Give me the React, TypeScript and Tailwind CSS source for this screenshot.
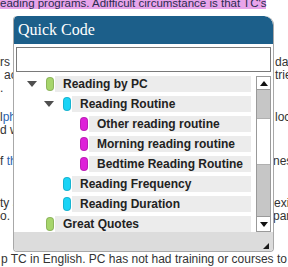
import React from "react";

type Row = { level: 0 | 1 | 2; expand?: boolean; color: "green" | "cyan" | "magenta"; label: string };

const rows: Row[] = [
  { level: 0, expand: true, color: "green", label: "Reading by PC" },
  { level: 1, expand: true, color: "cyan", label: "Reading Routine" },
  { level: 2, color: "magenta", label: "Other reading routine" },
  { level: 2, color: "magenta", label: "Morning reading routine" },
  { level: 2, color: "magenta", label: "Bedtime Reading Routine" },
  { level: 1, color: "cyan", label: "Reading Frequency" },
  { level: 1, color: "cyan", label: "Reading Duration" },
  { level: 0, color: "green", label: "Great Quotes" },
];

const padByLevel = ["pl-[11px]", "pl-[28px]", "pl-[45px]"];
const pillByColor: Record<Row["color"], string> = {
  green: "bg-[#a6d56b]",
  cyan: "bg-[#1ad4f6]",
  magenta: "bg-[#de20d8]",
};

function BgLine({ left, right, rw = "w-[275px]" }: { left: React.ReactNode; right: React.ReactNode; rw?: string }) {
  return (
    <div className="flex h-[13px] leading-[13px] whitespace-nowrap">
      <span className={`${rw} shrink-0`}>{left}</span>
      <span>{right}</span>
    </div>
  );
}

export default function App() {
  return (
    <div className="relative w-[288px] h-[267px] overflow-hidden bg-white font-['Liberation_Sans',Arial,sans-serif] text-[12px] text-[#333]">
      {/* background page text */}
      <div className="-mt-[4px] h-[14px] leading-[14px] whitespace-nowrap text-[11.5px]">
        <span className="bg-[#e8a4ea] text-[#2b2b50]">eading programs. Adifficult circumstance is that TC's</span>
      </div>
      <div className="mt-[46px]">
        <BgLine left="rs" right="days" />
        <BgLine left={<span className="pl-[4px]">ac</span>} right="tries" />
        <BgLine left="." right="" />
      </div>
      <div className="mt-[16px]">
        <BgLine left={<><span>l</span><span className="text-[#2a64b0]">ph</span></>} right="locat" />
        <BgLine left="d w" right="" />
      </div>
      <div className="mt-[18px]">
        <BgLine left={<><span>f </span><span className="text-[#2a64b0]">th</span></>} right="nes" rw="w-[273px]" />
      </div>
      <div className="mt-[29px]">
        <BgLine left={<><span>ty </span><span className="text-[#c9a227]">a</span></>} right="exic" rw="w-[274px]" />
        <BgLine left={<><span>o. </span><span className="text-[#c9a227]">S</span></>} right="parc" rw="w-[273px]" />
      </div>
      <div className="mt-[30px] h-[13px] leading-[13px] whitespace-nowrap pl-[1px]">
        p TC in English. PC has not had training or courses to
      </div>

      {/* Quick Code dialog */}
      <div className="absolute left-[13px] top-[16px] w-[261px] h-[236px] flex flex-col bg-white border border-t-0 border-[#a8a8a8] rounded-b-[4px] rounded-tl-[4px] rounded-tr-[9px] overflow-hidden">
        <div className="h-[28px] shrink-0 bg-[#1c5f8a] pl-[4px] rounded-tl-[4px] rounded-tr-[9px]">
          <span className="font-['Liberation_Serif','Times_New_Roman',serif] text-[16px] leading-[28px] text-white">Quick Code</span>
        </div>
        <div className="px-[2px] pt-[3px]">
          <div className="h-[25px] border border-[#7a7a7a] bg-white" />
        </div>
        <div className="mt-[4px] flex h-[156px] pl-[2px] pr-[2px]">
          <div className="flex-1 flex flex-col gap-[4px] pr-[5px]">
            {rows.map((r, i) => (
              <div key={i} className={`flex h-[16px] items-center ${padByLevel[r.level]}`}>
                <div className="w-[19px] shrink-0 flex items-center">
                  {r.expand ? (
                    <div className="w-0 h-0 border-l-[5px] border-r-[5px] border-t-[6px] border-l-transparent border-r-transparent border-t-[#4f4f4f]" />
                  ) : null}
                </div>
                <div className={`w-[8px] h-[14px] shrink-0 rounded-full border border-black/15 ${pillByColor[r.color]}`} />
                <div className="ml-[1px] flex-1 h-[16px] bg-[#ececec] pl-[8px] font-bold text-[12px] leading-[16px] text-[#222] whitespace-nowrap overflow-hidden">
                  {r.label}
                </div>
              </div>
            ))}
          </div>
          {/* scrollbar */}
          <div className="w-[15px] shrink-0 flex flex-col border border-[#9a9a9a] bg-[#c6c6c6]">
            <div className="h-[13px] shrink-0 bg-white border-b border-[#9a9a9a] flex items-center justify-center">
              <div className="w-0 h-0 border-l-[4px] border-r-[4px] border-b-[5px] border-l-transparent border-r-transparent border-b-[#111]" />
            </div>
            <div className="flex-1 flex flex-col">
              <div className="h-[28px] shrink-0" />
              <div className="h-[47px] shrink-0 bg-white border-y border-[#b0b0b0]" />
              <div className="flex-1" />
            </div>
            <div className="h-[15px] shrink-0 bg-white border-t border-[#9a9a9a] flex items-center justify-center">
              <div className="w-0 h-0 border-l-[4px] border-r-[4px] border-t-[5px] border-l-transparent border-r-transparent border-t-[#111]" />
            </div>
          </div>
        </div>
        <div className="relative flex-1 bg-[#dcdcdc]">
          <div className="absolute right-[4px] bottom-[2px] w-0 h-0 border-l-[6px] border-b-[6px] border-l-transparent border-b-[#1a1a1a]" />
        </div>
      </div>
    </div>
  );
}
